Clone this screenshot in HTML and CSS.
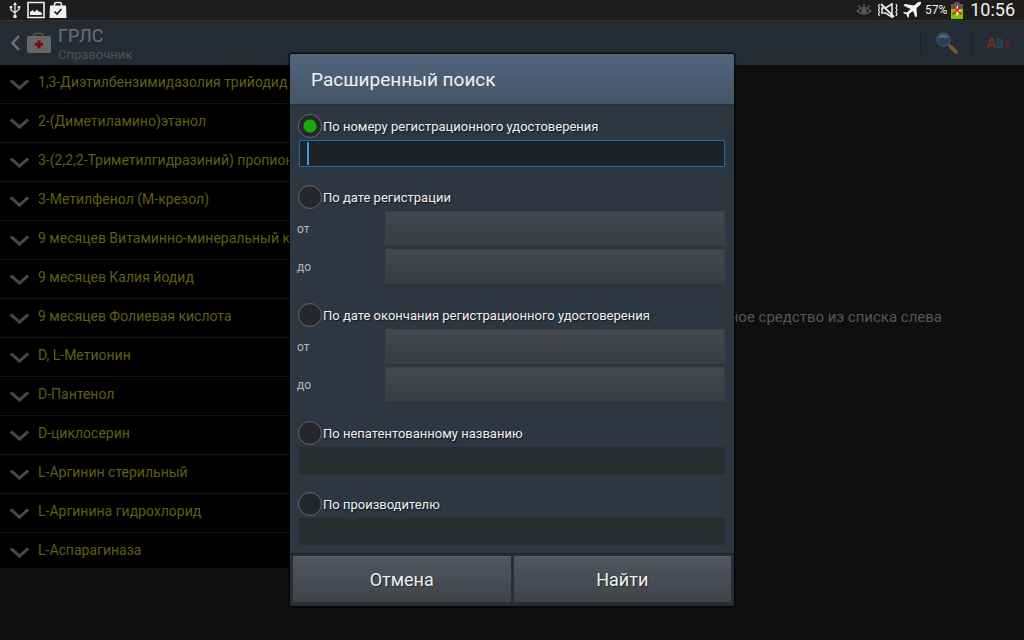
FILE: index.html
```html
<!DOCTYPE html>
<html lang="ru">
<head>
    <meta charset="UTF-8">
    <meta name="viewport" content="width=device-width, initial-scale=1.0">
    <title>ГРЛС - Расширенный поиск</title>
    <link rel="stylesheet" href="styles.css">
</head>
<body>
    <div class="status-bar">
        <div class="status-group">
            <svg width="12" height="18" viewBox="0 0 12 18" fill="none" stroke="#e8e8e8" stroke-width="1.3">
                <path d="M6 3v12M2 6.500v2.500l4 3M10 6.500v2l-4 3"/>
                <path d="M6 1l2 3H4zM.7 5h2.600v2.300H.7zM8.700 5h2.600v2.300H8.700z" fill="#e8e8e8" stroke="none"/>
                <circle cx="6" cy="15.500" r="1.800" fill="#e8e8e8" stroke="none"/>
            </svg>
            <svg width="18" height="18" viewBox="0 0 18 18">
                <path d="M1 1.500h16v15H1z" fill="#1d1d1d" stroke="#f0f0f0" stroke-width="1.600"/>
                <path d="M3 14v-3l2.500-2 2 2 2.500-2.500 2 2.500 1-.500 2 1.500v2z" fill="#f0f0f0"/>
            </svg>
            <svg width="18" height="18" viewBox="0 0 18 18">
                <path d="M5.500 5V3.500a2 2 0 0 1 2-2h3a2 2 0 0 1 2 2V5" fill="none" stroke="#f0f0f0" stroke-width="1.500"/>
                <path d="M1 4.500h16l.5 12.500H.5z" fill="#f0f0f0"/>
                <path d="M5.500 10.500l2.500 2.500 4.500-5" fill="none" stroke="#1d1d1d" stroke-width="1.700"/>
            </svg>
        </div>
        <div class="status-group status-right">
            <svg width="16" height="14" viewBox="0 0 16 14" fill="none" stroke="#5a5a5a" stroke-width="1.300">
                <path d="M1 8q7-7 14 0q-7 6-14 0zM8 3.500V1M4 4.500L2.500 2.500M12 4.500l1.500-2"/>
                <circle cx="8" cy="8" r="2" fill="#5a5a5a"/>
            </svg>
            <svg width="22" height="18" viewBox="0 0 22 18">
                <path d="M5 7h3.500L15 3v13l-6.500-4H5z" fill="none" stroke="#e8e8e8" stroke-width="1.600"/>
                <path d="M4 3l13 13" stroke="#e8e8e8" stroke-width="1.800"/>
                <path d="M2.500 3L1.500 5l1 2-1 2 1 2-1 2 1 2M19 3l1 2-1 2 1 2-1 2 1 2-1 2" fill="none" stroke="#e8e8e8" stroke-width="1.200"/>
            </svg>
            <svg width="20" height="18" viewBox="0 0 20 18" fill="#f4f4f4">
                <path d="M19 1q-2-1-4 1l-3 2.500L3 3 1.500 4.500 8.500 8 5 11.500l-3-.5-1 1 3.500 1.500L6 17l1-1v-3l4-3 2.500 6.500 1.500-1.500-.5-8L18 4q1.500-1.500 1-3z"/>
            </svg>
            <span class="battery-text">57%</span>
            <svg width="14" height="18" viewBox="0 0 14 18">
                <path d="M4.500 1h5v2H13v15H1V3h3.500z" fill="#5c5c5c"/>
                <path d="M1 8h12v10H1z" fill="#7cc400"/>
                <path d="M8 4l-4 7h3l-1 5 5-7H8z" fill="#fff"/>
                <path d="M2.500 4.500l9 9M11.500 4.500l-9 9" stroke="#e01818" stroke-width="1.700"/>
            </svg>
            <span class="clock">10:56</span>
        </div>
    </div>

    <div class="app">
        <header class="action-bar">
            <svg width="10" height="18" viewBox="0 0 10 18" fill="none" stroke="#6e7274" stroke-width="2.500">
                <path d="M9 2L2.500 9 9 16"/>
            </svg>
            <svg class="app-icon" width="26" height="22" viewBox="0 0 26 22">
                <path d="M8 4.500V3q0-1.500 1.500-1.500h6Q17 1.500 17 3v1.500" fill="none" stroke="#555" stroke-width="1.500"/>
                <rect x="1" y="4" width="24" height="17" rx="1.500" fill="#666"/>
                <path d="M11.500 8.500h3V11H17v3h-2.500v2.500h-3V14H9v-3h2.500z" fill="#750d12"/>
            </svg>
            <div class="titles">
                <h1>ГРЛС</h1>
                <p>Справочник</p>
            </div>
            <button class="action" aria-label="Поиск">
                <svg width="24" height="24" viewBox="0 0 24 24">
                    <path d="M13 13l3 3" stroke="#666" stroke-width="2"/>
                    <path d="M16 16l5 5" stroke="#7c5a26" stroke-width="3.500" stroke-linecap="round"/>
                    <circle cx="8.500" cy="8.500" r="6.500" fill="#24405e" stroke="#3c5068" stroke-width="1.500"/>
                    <path d="M3.500 7.500q1-4 5-4t5 4q-5-2-10 0z" fill="#5a6a78"/>
                </svg>
            </button>
            <button class="action" aria-label="Алфавит">
                <span class="abc"><span class="abc-a">A</span><span class="abc-b">B</span><span class="abc-c">c</span></span>
            </button>
        </header>

        <main class="content">
            <ul class="drug-list">
                <li>1,3-Диэтилбензимидазолия трийодид</li>
                <li>2-(Диметиламино)этанол</li>
                <li>3-(2,2,2-Триметилгидразиний) пропиона</li>
                <li>3-Метилфенол (М-крезол)</li>
                <li>9 месяцев Витаминно-минеральный ко</li>
                <li>9 месяцев Калия йодид</li>
                <li>9 месяцев Фолиевая кислота</li>
                <li>D, L-Метионин</li>
                <li>D-Пантенол</li>
                <li>D-циклосерин</li>
                <li>L-Аргинин стерильный</li>
                <li>L-Аргинина гидрохлорид</li>
                <li>L-Аспарагиназа</li>
            </ul>
            <p class="hint">лекарственное средство из списка слева</p>
        </main>

        <div class="overlay">
            <form class="dialog" role="dialog" aria-labelledby="dialogTitle">
                <h2 id="dialogTitle">Расширенный поиск</h2>
                <div class="dialog-body">
                    <div class="group">
                        <label class="option"><input type="radio" name="mode" checked>По номеру регистрационного удостоверения</label>
                        <div class="field active">
                            <input type="text" id="regNumber" aria-label="Номер регистрационного удостоверения">
                        </div>
                    </div>
                    <div class="group">
                        <label class="option"><input type="radio" name="mode">По дате регистрации</label>
                        <div class="dates">
                            <label for="regFrom">от</label>
                            <button type="button" id="regFrom"></button>
                            <label for="regTo">до</label>
                            <button type="button" id="regTo"></button>
                        </div>
                    </div>
                    <div class="group">
                        <label class="option"><input type="radio" name="mode">По дате окончания регистрационного удостоверения</label>
                        <div class="dates">
                            <label for="endFrom">от</label>
                            <button type="button" id="endFrom"></button>
                            <label for="endTo">до</label>
                            <button type="button" id="endTo"></button>
                        </div>
                    </div>
                    <div class="group">
                        <label class="option"><input type="radio" name="mode">По непатентованному названию</label>
                        <div class="field">
                            <input type="text" aria-label="Непатентованное название" disabled>
                        </div>
                    </div>
                    <div class="group">
                        <label class="option"><input type="radio" name="mode">По производителю</label>
                        <div class="field">
                            <input type="text" aria-label="Производитель" disabled>
                        </div>
                    </div>
                </div>
                <div class="dialog-buttons">
                    <button type="button">Отмена</button>
                    <button type="button">Найти</button>
                </div>
            </form>
        </div>
    </div>
</body>
</html>
```
FILE: styles.css
```css
* {
    box-sizing: border-box;
}

body {
    margin: 0;
    min-height: 100vh;
    display: flex;
    flex-direction: column;
    background: #0e0f10;
    color: #f0f0f0;
    font-family: Roboto, "Noto Sans", sans-serif;
    font-size: 14px;
}

h1, h2, p, ul {
    margin: 0;
    padding: 0;
    font-weight: normal;
}

button, input {
    margin: 0;
    font-family: inherit;
    color: inherit;
}

svg {
    display: block;
    flex: none;
}

/* status bar */
.status-bar {
    display: flex;
    justify-content: space-between;
    height: 20px;
    padding: 0 9px;
    background: #1d1d1d;
}

.status-group {
    display: flex;
    align-items: center;
    gap: 4px;
}

.status-group svg:first-child {
    margin-right: 2px;
}

.status-right {
    gap: 3px;
}

.battery-text {
    font-size: 12px;
}

.clock {
    margin-left: 3px;
    font-size: 18px;
    line-height: 20px;
}

/* app */
.app {
    position: relative;
    flex: 1;
}

.action-bar {
    display: flex;
    align-items: center;
    height: 45px;
    padding-left: 10px;
    background: #232c32;
    border-top: 1px solid #28343b;
}

.app-icon {
    margin: 0 6px;
}

.titles {
    flex: 1;
    padding-top: 3px;
    color: #6b7073;
}

.titles h1 {
    font-size: 18px;
    line-height: 20px;
}

.titles p {
    font-size: 13px;
    line-height: 18px;
    color: #4e5558;
}

.action {
    display: flex;
    align-items: center;
    justify-content: center;
    width: 52px;
    height: 22px;
    padding: 0;
    border: 0;
    border-left: 1px solid #1a2227;
    background: none;
}

.abc {
    font-size: 12px;
    font-weight: bold;
}

.abc-a {
    font-size: 14px;
    color: #6e3414;
}

.abc-b {
    color: #1f4a60;
}

.abc-c {
    color: #6a1c20;
}

.content {
    display: grid;
    grid-template-columns: 290px 1fr;
}

.drug-list {
    list-style: none;
    background: #000;
    color: #5f5f13;
}

.drug-list li {
    display: flex;
    height: 39px;
    padding: 7px 0 0 10px;
    border-bottom: 1px solid #141414;
    line-height: 20px;
    white-space: nowrap;
    overflow: hidden;
}

.drug-list li:last-child {
    height: 35px;
    border-bottom: 0;
}

/* chevron */
.drug-list li::before {
    content: "";
    flex: none;
    width: 10px;
    height: 10px;
    margin: 3px 12px 0 3px;
    border: solid #484848;
    border-width: 0 3px 3px 0;
    transform: rotate(45deg) skew(-4deg, -4deg);
}

.hint {
    align-self: center;
    padding-right: 82px;
    text-align: right;
    font-size: 15px;
    color: #565656;
}

/* dialog */
.overlay {
    position: absolute;
    inset: 0;
    display: flex;
    align-items: center;
    justify-content: center;
}

.dialog {
    width: 444px;
    background: #2c3742;
    border-radius: 2px;
    box-shadow: 0 0 2px 1px #000;
    overflow: hidden;
}

.dialog h2 {
    padding: 1px 21px 0;
    border-bottom: 2px solid #27313b;
    background: linear-gradient(#52657d, #445468);
    font-size: 19px;
    line-height: 49px;
}

.dialog-body {
    display: flex;
    flex-direction: column;
    gap: 16px;
    padding: 6px 9px 8px;
}

.option {
    display: flex;
    align-items: center;
    gap: 1px;
    height: 28px;
    margin-left: -1px;
    font-size: 13px;
    text-shadow: 1px 1px 1px #111820;
}

.option input {
    appearance: none;
    width: 24px;
    height: 24px;
    border: 1px solid #66686b;
    border-radius: 50%;
    background: #24282d;
}

.option input:checked {
    background: radial-gradient(circle, #1aa80a 6px, #24282d 7px);
}

.field {
    height: 27px;
    border: 1px solid #282d2f;
    border-radius: 1px;
    background: #282d2f;
}

.field input {
    width: 100%;
    height: 100%;
    padding: 0 7px;
    border: 0;
    outline: 0;
    background: none;
}

.field.active {
    position: relative;
    border-color: #1a6fb0;
    background: #1e2225;
}

/* text cursor */
.field.active::after {
    content: "";
    position: absolute;
    top: 1px;
    bottom: 1px;
    left: 7px;
    width: 2px;
    background: #3f97dc;
}

.dates {
    display: grid;
    grid-template-columns: 88px 1fr;
    row-gap: 2px;
    align-items: center;
    margin-left: -2px;
    font-size: 12px;
    color: #b4b8bb;
}

.dates button {
    height: 36px;
    border: 1px solid #3e4347;
    border-bottom-color: #2c3134;
    background: linear-gradient(#43484e, #393d40);
}

.dialog-buttons {
    display: grid;
    grid-template-columns: 1fr 1fr;
    gap: 3px;
    padding: 2px 3px 4px;
    border-top: 1px solid #1d242c;
    background: #262e36;
}

.dialog-buttons button {
    height: 46px;
    padding: 0;
    border: 0;
    border-top: 1px solid #5a6168;
    border-radius: 1px;
    background: linear-gradient(#50575f, #3f4349);
    font-size: 18px;
    text-shadow: 1px 1px 1px #22262c;
}
```
